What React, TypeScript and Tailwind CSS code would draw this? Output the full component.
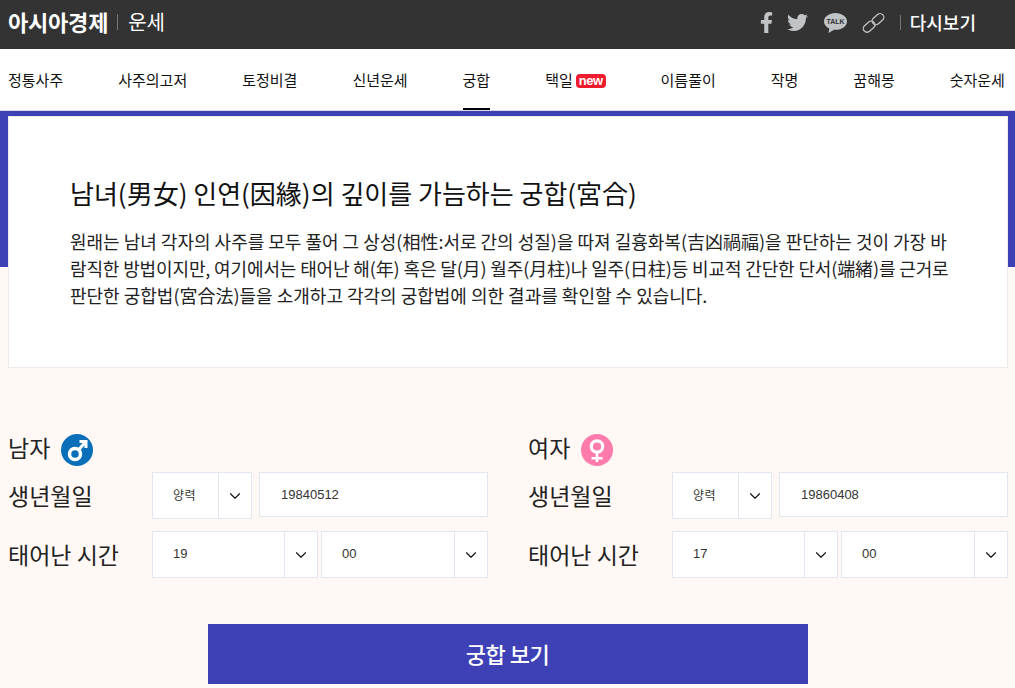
import React from "react";
import { FaFacebookF, FaTwitter } from "react-icons/fa";
import { ChevronDown } from "lucide-react";

const font = "font-['Noto_Sans_CJK_KR','Liberation_Sans',sans-serif]";

const menus = ["정통사주", "사주의고저", "토정비결", "신년운세", "궁합", "택일", "이름풀이", "작명", "꿈해몽", "숫자운세"];

function TalkIcon() {
  return (
    <svg width="23" height="20" viewBox="0 0 23 20">
      <path d="M11.5 0C5.2 0 0 3.7 0 8.4c0 3 2.1 5.600 5.300 7.100L4.600 19.500c-.1.400.2.500.5.300l4.800-3.100c.5.100 1.100.1 1.600.1 6.300 0 11.500-3.700 11.500-8.400S17.800 0 11.500 0z" fill="#c0c4c7" />
      <text x="11.500" y="11" textAnchor="middle" fontSize="7" fontWeight="700" fill="#333" fontFamily="Liberation Sans">TALK</text>
    </svg>
  );
}

function ChainIcon() {
  return (
    <svg width="24" height="22" viewBox="0 0 24 22" fill="none" stroke="#c0c4c7" strokeWidth="1.300">
      <rect x="0.500" y="7" width="13" height="7.500" rx="3.700" transform="rotate(-42 7 10.750) translate(-2.500 3)" />
      <rect x="10" y="7" width="13" height="7.500" rx="3.700" transform="rotate(-42 16.500 10.750) translate(2 -3)" />
    </svg>
  );
}

function Select({ value, className, num }: { value: string; className: string; num?: boolean }) {
  return (
    <div className={`flex h-[47px] border border-[#e2e6f0] bg-white ${className}`}>
      <span className={`flex-1 pl-[20px] leading-[43px] text-[#333] ${num ? "font-['Liberation_Sans',sans-serif] text-[13px]" : "text-[12px] tracking-[0.5px]"}`}>{value}</span>
      <span className="flex w-[33px] items-center justify-center border-l border-[#e2e6f0]">
        <ChevronDown size={18} strokeWidth={1.500} color="#111" />
      </span>
    </div>
  );
}

function Person({ name, gender, birth, hour }: { name: string; gender: "m" | "f"; birth: string; hour: string }) {
  return (
    <div className="w-[480px]">
      <div className="flex h-[32px] items-center gap-[11px]">
        <span className="pb-[6px] text-[23px] text-[#222]">{name}</span>
        {gender === "m" ? (
          <svg width="32" height="32" viewBox="0 0 32 32">
            <circle cx="16" cy="16" r="16" fill="#0a6fb8" />
            <circle cx="14" cy="20" r="5.500" fill="none" stroke="#fff" strokeWidth="3.500" />
            <path d="M17.500 16l6-7M18.500 7.500h6.500v6.500" fill="none" stroke="#fff" strokeWidth="3" />
          </svg>
        ) : (
          <svg width="32" height="32" viewBox="0 0 32 32">
            <circle cx="16" cy="16" r="16" fill="#ff7bac" />
            <circle cx="16" cy="12.500" r="5.700" fill="none" stroke="#fff" strokeWidth="3.200" />
            <path d="M16 18v10M10.500 24.300h11" fill="none" stroke="#fff" strokeWidth="2.600" />
          </svg>
        )}
      </div>
      <div className="mt-[6px] flex items-start">
        <span className="w-[144px] text-[23px] leading-[46px] text-[#222]">생년월일</span>
        <Select value="양력" className="w-[100px]" />
        <div className="ml-[7px] h-[45px] w-[229px] border border-[#e2e6f0] bg-white pl-[21px] font-['Liberation_Sans',sans-serif] text-[13px] leading-[43px] text-[#333]">
          {birth}
        </div>
      </div>
      <div className="mt-[12px] flex items-start">
        <span className="w-[144px] text-[23px] leading-[46px] text-[#222]">태어난 시간</span>
        <Select value={hour} num className="w-[166px]" />
        <Select value="00" num className="ml-[3px] w-[167px]" />
      </div>
    </div>
  );
}

export default function App() {
  return (
    <div className={`h-[688px] overflow-hidden bg-[#fff8f5] ${font}`}>
      <header className="flex h-[49px] items-center justify-between bg-[#333] pb-[4px] pl-[8px] pr-[39px]">
        <div className="flex items-center pb-[2px]">
          <span className="text-[22px] font-bold tracking-[-0.2px] text-white">아시아경제</span>
          <span className="ml-[9px] mr-[10px] h-[16px] w-px bg-[#777]" />
          <span className="text-[20px] text-white">운세</span>
        </div>
        <div className="flex items-center">
          <FaFacebookF size={21} color="#c0c4c7" />
          <FaTwitter size={21} color="#c0c4c7" className="ml-[10px]" />
          <span className="ml-[16px] flex"><TalkIcon /></span>
          <span className="ml-[15px] flex"><ChainIcon /></span>
          <span className="ml-[14px] h-[15px] w-px bg-[#777]" />
          <span className="ml-[9px] text-[18px] font-medium text-white">다시보기</span>
        </div>
      </header>

      <nav className="flex h-[62px] justify-between border-b border-[#d9d9e0] bg-white pl-[8px] pr-[10px]">
        {menus.map((m) => (
          <a key={m} className={`flex h-[61px] items-center gap-[3px] text-[15px] text-[#111] ${m === "궁합" ? "border-b-2 border-black pt-[4px]" : "pt-[2px]"}`}>
            {m}
            {m === "택일" && (
              <span className="rounded-[4px] bg-[#ee1c2e] px-[3px] font-['Liberation_Sans',sans-serif] text-[13px] leading-[14px] font-bold tracking-[-0.5px] text-white">new</span>
            )}
          </a>
        ))}
      </nav>

      <div className="h-[156px] bg-[#3d41b5]" />

      <section className="ml-[8px] mr-[7px] -mt-[151px] h-[252px] border border-[#f0e9e6] bg-white pl-[61px] pt-[57px]">
        <h2 className="text-[26px] leading-[38px] text-[#111]">남녀(男女) 인연(因緣)의 깊이를 가늠하는 궁합(宮合)</h2>
        <p className="mt-[16px] text-[18px] leading-[27px] whitespace-nowrap text-[#222]">
          <span className="block">원래는 남녀 각자의 사주를 모두 풀어 그 상성(相性:서로 간의 성질)을 따져 길흉화복(吉凶禍福)을 판단하는 것이 가장 바</span>
          <span className="block tracking-[-0.13px]">람직한 방법이지만, 여기에서는 태어난 해(年) 혹은 달(月) 월주(月柱)나 일주(日柱)등 비교적 간단한 단서(端緖)를 근거로</span>
          <span className="block">판단한 궁합법(宮合法)들을 소개하고 각각의 궁합법에 의한 결과를 확인할 수 있습니다.</span>
        </p>
      </section>

      <div className="mt-[66px] flex gap-[40px] px-[8px]">
        <Person name="남자" gender="m" birth="19840512" hour="19" />
        <Person name="여자" gender="f" birth="19860408" hour="17" />
      </div>

      <button className="mx-auto mt-[46px] block h-[60px] w-[600px] bg-[#3d41b5] pb-[2px] text-[22px] font-medium tracking-[-0.5px] text-white">궁합 보기</button>
    </div>
  );
}
